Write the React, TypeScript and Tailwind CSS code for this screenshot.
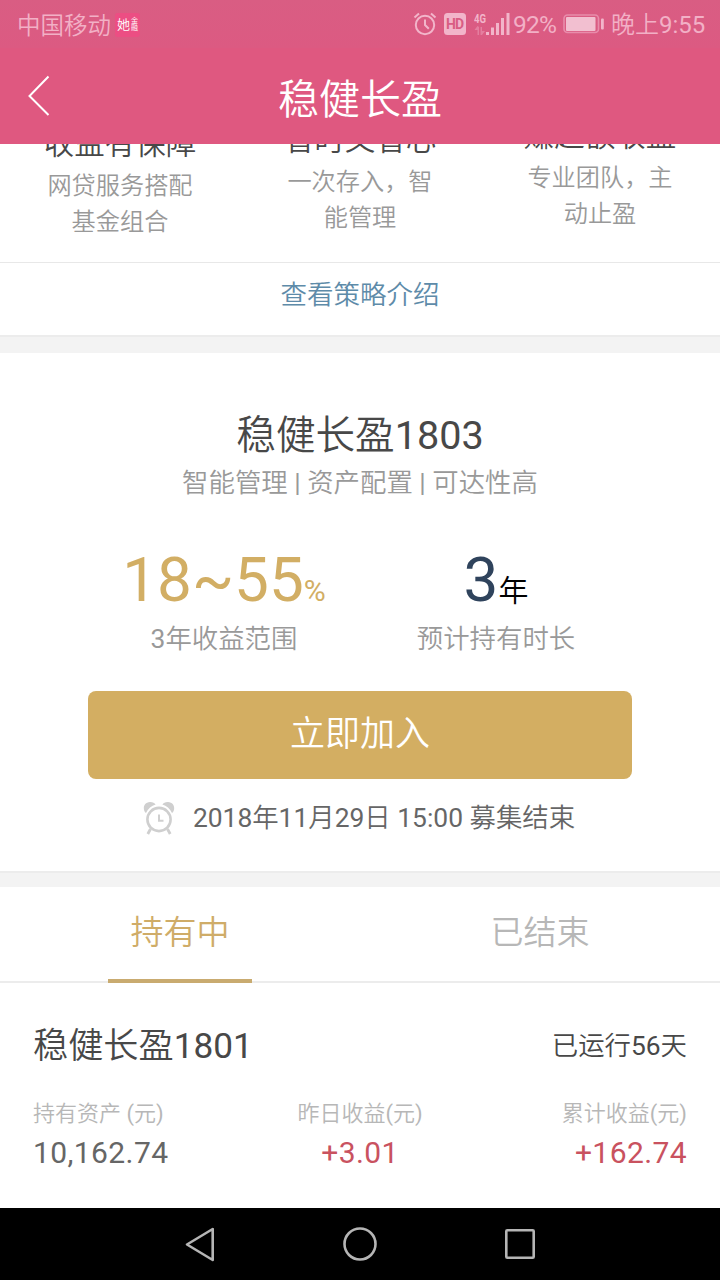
import type { ReactNode } from "react";

function AlarmSmall() {
  return (
    <svg className="h-[24px] w-[24px]" viewBox="0 0 24 24" fill="none" stroke="#f2b5ca" strokeWidth="2">
      <circle cx="12" cy="13" r="9.2" />
      <path d="M12 7.5V13l3.8 3.8" />
      <path d="M1.5 5.5 6 1.6M22.500 5.500 18 1.600" />
    </svg>
  );
}

function AlarmLarge() {
  return (
    <svg className="h-[34px] w-[32px]" viewBox="0 0 32 34" fill="none">
      <path d="M3 12C-.5 9.500-.2 1.400 7 1c2.600-.1 4.600.9 5.600 2.400C8.500 4.700 5 7.500 3 12Z" fill="#cfcfcf" />
      <path d="M29 12C32.500 9.500 32.200 1.400 25 1c-2.600-.1-4.600.9-5.600 2.400C23.500 4.700 27 7.500 29 12Z" fill="#cfcfcf" />
      <circle cx="16" cy="18.500" r="11.600" stroke="#cfcfcf" strokeWidth="2.600" />
      <path d="M16 13.500v6.300h4.500" stroke="#cfcfcf" strokeWidth="2" />
      <path d="M7.500 28 4.800 33M24.500 28l2.700 5" stroke="#cfcfcf" strokeWidth="2.800" />
    </svg>
  );
}

function StatusBar() {
  return (
    <div className="flex h-[48px] items-center bg-gradient-to-b from-[#d95d83] to-[#dc5a82] pl-[17px] text-[23.500px] text-[#f2b0c6]">
      <span className="pt-[5px] leading-[43px]">中国移动</span>
      <span className="ml-[4px] mt-[2px] flex h-[24px] w-[25px] items-center gap-px overflow-hidden rounded-[3px] bg-[#ec4e83] pl-[2px] text-white">
        <span className="text-[13px] leading-[24px]">她</span>
        <span className="flex w-[8px] flex-col text-[7px] leading-[7px]">
          <span>金</span>
          <span>融</span>
        </span>
      </span>
      <div className="ml-[273px] flex items-center">
        <AlarmSmall />
        <svg className="ml-[7px] h-[22px] w-[22px]" viewBox="0 0 22 22">
          <rect width="22" height="22" rx="3.500" fill="#f2b5ca" />
          <text x="11" y="16" textAnchor="middle" textLength="18" fontFamily="Roboto" fontWeight="700" fontSize="14" fill="#d95d83">HD</text>
        </svg>
        <svg className="ml-[8px] h-[24px] w-[36px]" viewBox="0 0 36 24" fill="#f2b5ca">
          <text x="0" y="10.500" textLength="12" lengthAdjust="spacingAndGlyphs" fontFamily="Roboto" fontWeight="700" fontSize="13">4G</text>
          <path d="M12 20h3v3h-3zM17 15.500h3V23h-3zM22 11h3v12h-3zM27 6h3v17h-3zM32.500 1h3v22h-3z" />
          <path d="M3.500 15v8H5v-8L3.500 14 .5 18h3zM6.500 15v8H8l3-4H8v-4z" opacity=".4" />
        </svg>
        <span className="ml-[3px] w-[46px] pt-[2px] text-[24.500px] leading-[46px] tracking-[-0.800px]">92%</span>
        <svg className="ml-[4px] h-[20px] w-[41px]" viewBox="0 0 41 20" fill="none">
          <rect x="1" y="1" width="34.500" height="17.500" rx="3.500" stroke="#e88cab" strokeWidth="1.600" />
          <rect x="3" y="3" width="29.500" height="14" rx="1" fill="#f2bfd0" />
          <rect x="38" y="4.500" width="2.800" height="11" rx="1" fill="#f2b5ca" />
        </svg>
        <span className="ml-[7px] whitespace-nowrap pt-[3px] text-[24px] leading-[45px]">晚上9:55</span>
      </div>
    </div>
  );
}

function Feature({ title, lines, pad }: { title: string; lines: string[]; pad: string }) {
  return (
    <div className={`flex w-[240px] flex-col items-center ${pad}`}>
      <div className="h-[44px] text-[30.500px] leading-[40px] text-[#484848]">{title}</div>
      {lines.map((l) => (
        <div key={l} className="text-[24.200px] leading-[36px] text-[#999]">{l}</div>
      ))}
    </div>
  );
}

function Band({ h }: { h: string }) {
  return <div className={`border-t-2 border-[#ececec] bg-[#f3f3f3] ${h}`} />;
}

function Holding({ label, children, align }: { label: string; children: ReactNode; align: string }) {
  return (
    <div className={`flex flex-col ${align}`}>
      <span className="text-[22px] leading-[34px] text-[#b7b7b7]">{label}</span>
      <span className="text-[30px] leading-[44px] tracking-[0.400px]">{children}</span>
    </div>
  );
}

export default function App() {
  return (
    <div className="flex h-[1280px] w-[720px] flex-col overflow-hidden bg-white font-['Roboto','Noto_Sans_CJK_SC_DemiLight','Noto_Sans_CJK_SC_Light','Noto_Sans_CJK_SC',sans-serif] whitespace-nowrap">
      <StatusBar />
      <header className="flex h-[96px] items-center bg-[#df5880] text-white">
        <svg className="ml-[28px] h-[42px] w-[22px]" viewBox="0 0 22 42" fill="none" stroke="#fff" strokeWidth="2">
          <path d="M20.500 1.500 1.500 21l19 19" />
        </svg>
        <h1 className="w-[620px] pt-[8px] text-center text-[41px] leading-[60px]">稳健长盈</h1>
      </header>

      <section className="flex h-[118px] overflow-hidden">
        <Feature title="收益有保障" lines={["网贷服务搭配", "基金组合"]} pad="-mt-[20px]" />
        <Feature title="省时又省心" lines={["一次存入，智", "能管理"]} pad="-mt-[24px]" />
        <Feature title="赚超额收益" lines={["专业团队，主", "动止盈"]} pad="-mt-[28px]" />
      </section>
      <div className="h-[73px] border-t border-[#e8e8e8] pt-[12px] text-center text-[26.500px] leading-[40px] text-[#5e8ba9]">查看策略介绍</div>
      <Band h="h-[18px]" />

      <section className="flex h-[518px] flex-col items-center">
        <h2 className="h-[113px] pt-[53px] text-[39.600px] leading-[60px] text-[#484848]">稳健长盈1803</h2>
        <p className="text-[26.400px] leading-[34px] text-[#999]">智能管理 | 资产配置 | 可达性高</p>
        <div className="flex h-[191px] w-[544px]">
          <div className="flex w-[272px] flex-col items-center pt-[40px]">
            <div className="h-[82px] leading-[80px] text-[#d2ae64]">
              <span className="text-[62px]">18~55</span>
              <span className="text-[30px]">%</span>
            </div>
            <div className="text-[26.400px] leading-[34px] text-[#999]">3年收益范围</div>
          </div>
          <div className="flex w-[272px] flex-col items-center pt-[40px]">
            <div className="h-[82px] leading-[80px] text-black">
              <span className="text-[62px] text-[#2f435c]">3</span>
              <span className="text-[30px]">年</span>
            </div>
            <div className="text-[26.400px] leading-[34px] text-[#999]">预计持有时长</div>
          </div>
        </div>
        <button className="h-[88px] w-[544px] rounded-[8px] bg-[#d3ae62] text-[35px] leading-[80px] text-white">立即加入</button>
        <div className="-ml-[2px] flex items-center gap-[18px] pt-[20px] text-[26.400px] leading-[38px] text-[#666]">
          <AlarmLarge />
          <span>2018年11月29日 15:00 募集结束</span>
        </div>
      </section>
      <Band h="h-[16px]" />

      <nav className="flex h-[96px] border-b-2 border-[#ececec] text-[33px] leading-[92px]">
        <div className="flex w-[360px] justify-center text-[#cfac68]">
          <span className="h-[96px] w-[144px] border-b-4 border-[#c9ab70] text-center">持有中</span>
        </div>
        <div className="w-[360px] text-center text-[#b7b7b7]">已结束</div>
      </nav>

      <section className="flex h-[225px] flex-col px-[33px] pt-[39px]">
        <div className="flex items-center justify-between text-[#484848]">
          <span className="text-[35.200px] leading-[48px]">稳健长盈1801</span>
          <span className="text-[26.400px] leading-[48px]">已运行56天</span>
        </div>
        <div className="mt-[27px] flex justify-between text-[#666]">
          <Holding label="持有资产 (元)" align="w-[218px] items-start">10,162.74</Holding>
          <Holding label="昨日收益(元)" align="w-[218px] items-center text-[#c9525f]">+3.01</Holding>
          <Holding label="累计收益(元)" align="w-[218px] items-end text-[#c9525f]">+162.74</Holding>
        </div>
      </section>

      <footer className="flex h-[72px] items-center justify-center bg-black">
        <svg className="h-[72px] w-[400px]" viewBox="160 0 400 72" fill="none" stroke="#b5b5b5" strokeWidth="2.600" strokeLinejoin="round">
          <path d="M212.700 21v31L187 36.500Z" />
          <circle cx="360" cy="36" r="15.500" />
          <rect x="506.300" y="22.300" width="27.400" height="27.400" rx="1" />
        </svg>
      </footer>
    </div>
  );
}
